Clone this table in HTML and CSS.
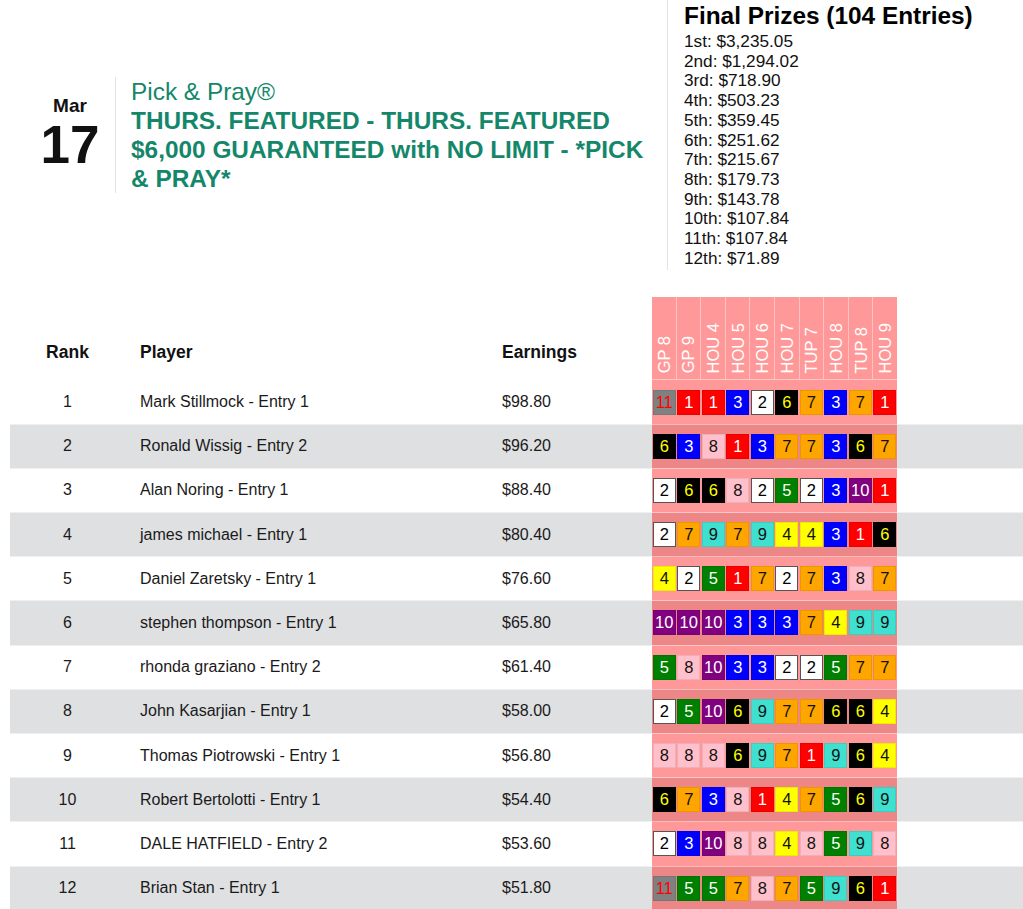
FILE: index.html
```html
<!DOCTYPE html>
<html>
<head>
<meta charset="utf-8">
<link rel="stylesheet" href="styles.css">
</head>
<body>
<div class="top">
  <div class="event">
    <div class="date">
      <div class="month">Mar</div>
      <div class="day">17</div>
    </div>
    <div class="title">
      <div class="brand">Pick &amp; Pray®</div>
      <div class="name">THURS. FEATURED - THURS. FEATURED $6,000 GUARANTEED with NO LIMIT - *PICK &amp; PRAY*</div>
    </div>
  </div>
  <div class="prizes">
    <div class="prizes-title">Final Prizes (104 Entries)</div>
    <div class="prize">1st: $3,235.05</div>
    <div class="prize">2nd: $1,294.02</div>
    <div class="prize">3rd: $718.90</div>
    <div class="prize">4th: $503.23</div>
    <div class="prize">5th: $359.45</div>
    <div class="prize">6th: $251.62</div>
    <div class="prize">7th: $215.67</div>
    <div class="prize">8th: $179.73</div>
    <div class="prize">9th: $143.78</div>
    <div class="prize">10th: $107.84</div>
    <div class="prize">11th: $107.84</div>
    <div class="prize">12th: $71.89</div>
  </div>
</div>

<table class="board">
  <thead>
    <tr>
      <th class="rank">Rank</th>
      <th class="player">Player</th>
      <th class="earn">Earnings</th>
      <th class="picks-h">
        <div class="races">
          <div class="race"><span>GP 8</span></div>
          <div class="race"><span>GP 9</span></div>
          <div class="race"><span>HOU 4</span></div>
          <div class="race"><span>HOU 5</span></div>
          <div class="race"><span>HOU 6</span></div>
          <div class="race"><span>HOU 7</span></div>
          <div class="race"><span>TUP 7</span></div>
          <div class="race"><span>HOU 8</span></div>
          <div class="race"><span>TUP 8</span></div>
          <div class="race"><span>HOU 9</span></div>
        </div>
      </th>
      <th class="fill"></th>
    </tr>
  </thead>
  <tbody>
    <tr>
      <td class="rank">1</td><td class="player">Mark Stillmock - Entry 1</td><td class="earn">$98.80</td>
      <td class="picks"><div class="row"><span class="p c11">11</span><span class="p c1">1</span><span class="p c1">1</span><span class="p c3">3</span><span class="p c2">2</span><span class="p c6">6</span><span class="p c7">7</span><span class="p c3">3</span><span class="p c7">7</span><span class="p c1">1</span></div></td><td class="fill"></td>
    </tr>
    <tr>
      <td class="rank">2</td><td class="player">Ronald Wissig - Entry 2</td><td class="earn">$96.20</td>
      <td class="picks"><div class="row"><span class="p c6">6</span><span class="p c3">3</span><span class="p c8">8</span><span class="p c1">1</span><span class="p c3">3</span><span class="p c7">7</span><span class="p c7">7</span><span class="p c3">3</span><span class="p c6">6</span><span class="p c7">7</span></div></td><td class="fill"></td>
    </tr>
    <tr>
      <td class="rank">3</td><td class="player">Alan Noring - Entry 1</td><td class="earn">$88.40</td>
      <td class="picks"><div class="row"><span class="p c2">2</span><span class="p c6">6</span><span class="p c6">6</span><span class="p c8">8</span><span class="p c2">2</span><span class="p c5">5</span><span class="p c2">2</span><span class="p c3">3</span><span class="p c10">10</span><span class="p c1">1</span></div></td><td class="fill"></td>
    </tr>
    <tr>
      <td class="rank">4</td><td class="player">james michael - Entry 1</td><td class="earn">$80.40</td>
      <td class="picks"><div class="row"><span class="p c2">2</span><span class="p c7">7</span><span class="p c9">9</span><span class="p c7">7</span><span class="p c9">9</span><span class="p c4">4</span><span class="p c4">4</span><span class="p c3">3</span><span class="p c1">1</span><span class="p c6">6</span></div></td><td class="fill"></td>
    </tr>
    <tr>
      <td class="rank">5</td><td class="player">Daniel Zaretsky - Entry 1</td><td class="earn">$76.60</td>
      <td class="picks"><div class="row"><span class="p c4">4</span><span class="p c2">2</span><span class="p c5">5</span><span class="p c1">1</span><span class="p c7">7</span><span class="p c2">2</span><span class="p c7">7</span><span class="p c3">3</span><span class="p c8">8</span><span class="p c7">7</span></div></td><td class="fill"></td>
    </tr>
    <tr>
      <td class="rank">6</td><td class="player">stephen thompson - Entry 1</td><td class="earn">$65.80</td>
      <td class="picks"><div class="row"><span class="p c10">10</span><span class="p c10">10</span><span class="p c10">10</span><span class="p c3">3</span><span class="p c3">3</span><span class="p c3">3</span><span class="p c7">7</span><span class="p c4">4</span><span class="p c9">9</span><span class="p c9">9</span></div></td><td class="fill"></td>
    </tr>
    <tr>
      <td class="rank">7</td><td class="player">rhonda graziano - Entry 2</td><td class="earn">$61.40</td>
      <td class="picks"><div class="row"><span class="p c5">5</span><span class="p c8">8</span><span class="p c10">10</span><span class="p c3">3</span><span class="p c3">3</span><span class="p c2">2</span><span class="p c2">2</span><span class="p c5">5</span><span class="p c7">7</span><span class="p c7">7</span></div></td><td class="fill"></td>
    </tr>
    <tr>
      <td class="rank">8</td><td class="player">John Kasarjian - Entry 1</td><td class="earn">$58.00</td>
      <td class="picks"><div class="row"><span class="p c2">2</span><span class="p c5">5</span><span class="p c10">10</span><span class="p c6">6</span><span class="p c9">9</span><span class="p c7">7</span><span class="p c7">7</span><span class="p c6">6</span><span class="p c6">6</span><span class="p c4">4</span></div></td><td class="fill"></td>
    </tr>
    <tr>
      <td class="rank">9</td><td class="player">Thomas Piotrowski - Entry 1</td><td class="earn">$56.80</td>
      <td class="picks"><div class="row"><span class="p c8">8</span><span class="p c8">8</span><span class="p c8">8</span><span class="p c6">6</span><span class="p c9">9</span><span class="p c7">7</span><span class="p c1">1</span><span class="p c9">9</span><span class="p c6">6</span><span class="p c4">4</span></div></td><td class="fill"></td>
    </tr>
    <tr>
      <td class="rank">10</td><td class="player">Robert Bertolotti - Entry 1</td><td class="earn">$54.40</td>
      <td class="picks"><div class="row"><span class="p c6">6</span><span class="p c7">7</span><span class="p c3">3</span><span class="p c8">8</span><span class="p c1">1</span><span class="p c4">4</span><span class="p c7">7</span><span class="p c5">5</span><span class="p c6">6</span><span class="p c9">9</span></div></td><td class="fill"></td>
    </tr>
    <tr>
      <td class="rank">11</td><td class="player">DALE HATFIELD - Entry 2</td><td class="earn">$53.60</td>
      <td class="picks"><div class="row"><span class="p c2">2</span><span class="p c3">3</span><span class="p c10">10</span><span class="p c8">8</span><span class="p c8">8</span><span class="p c4">4</span><span class="p c8">8</span><span class="p c5">5</span><span class="p c9">9</span><span class="p c8">8</span></div></td><td class="fill"></td>
    </tr>
    <tr>
      <td class="rank">12</td><td class="player">Brian Stan - Entry 1</td><td class="earn">$51.80</td>
      <td class="picks"><div class="row"><span class="p c11">11</span><span class="p c5">5</span><span class="p c5">5</span><span class="p c7">7</span><span class="p c8">8</span><span class="p c7">7</span><span class="p c5">5</span><span class="p c9">9</span><span class="p c6">6</span><span class="p c1">1</span></div></td><td class="fill"></td>
    </tr>
  </tbody>
</table>
</body>
</html>
```
FILE: styles.css
```css
html, body {
  margin: 0;
  padding: 0;
  background: #fff;
  overflow: hidden;
}
body {
  font-family: "Liberation Sans", Arial, sans-serif;
  color: #111;
}

.top {
  display: flex;
  align-items: center;
  padding-left: 10px;
}
.event {
  flex: 1;
  display: flex;
  align-items: stretch;
}
.date {
  width: 90px;
  margin-left: 15px;
  border-right: 1px solid #e2e2e2;
  display: flex;
  flex-direction: column;
  align-items: center;
  justify-content: center;
  font-weight: bold;
  color: #111;
  padding-bottom: 2px;
}
.month {
  font-size: 19px;
  line-height: 22px;
}
.day {
  font-size: 53px;
  line-height: 56px;
}
.title {
  flex: 1;
  padding: 0 16px 0 15px;
  color: #14876b;
  font-size: 24.4px;
  line-height: 29px;
}
.name {
  font-weight: bold;
}
.prizes {
  width: 356px;
  box-sizing: border-box;
  border-left: 1px solid #e2e2e2;
  padding-left: 16px;
  padding-bottom: 2px;
}
.prizes-title {
  font-weight: bold;
  font-size: 24.4px;
  line-height: 34px;
  margin-top: -1px;
  margin-bottom: -1px;
  color: #000;
}
.prize {
  font-size: 17.2px;
  line-height: 19.7px;
  color: #111;
}

.board {
  margin-top: 27px;
  margin-left: 10px;
  width: 1013px;
  border-collapse: collapse;
  table-layout: fixed;
  font-size: 16px;
}
.board th {
  font-weight: bold;
  font-size: 17.5px;
  text-align: left;
  vertical-align: bottom;
  height: 82px;
  padding: 0 0 17px 15px;
  box-sizing: border-box;
}
.board th.rank, .board td.rank {
  width: 115px;
  text-align: center;
  padding-left: 0;
}
.board .player {
  width: 362px;
}
.board .earn {
  width: 165px;
}
.board .picks-h, .board .picks {
  width: 245px;
  padding: 0;
  background: rgba(255, 0, 0, 0.4);
  border-bottom: 1px solid rgba(255, 255, 255, 0.45);
}
.board .fill {
  padding: 0;
}
.board td {
  height: 44.2px;
  box-sizing: border-box;
  padding: 0 0 0 15px;
  vertical-align: middle;
  color: #1a1a1a;
}
.board tbody tr {
  border-bottom: 1px solid #f0f0f0;
}
.board tbody tr:nth-child(even) {
  background: #dfe0e2;
}

.races {
  display: flex;
  height: 82px;
}
.race {
  flex: 1;
  display: flex;
  justify-content: center;
  align-items: flex-end;
  padding-bottom: 6px;
  border-right: 1px solid rgba(255, 255, 255, 0.4);
}
.race:last-child {
  border-right: none;
}
.race span {
  writing-mode: vertical-rl;
  transform: rotate(180deg);
  color: #fff;
  font-weight: normal;
  font-size: 16.5px;
  line-height: 18px;
  white-space: nowrap;
}

.row {
  display: grid;
  grid-template-columns: repeat(10, 1fr);
  align-items: center;
  justify-items: center;
}
.p {
  width: 23px;
  height: 25px;
  box-sizing: border-box;
  display: flex;
  align-items: center;
  justify-content: center;
  font-size: 16.5px;
  border: 1px solid rgba(0, 0, 0, 0.08);
}
.c1 { background: #ff0000; color: #fff; }
.c2 { background: #fff; color: #000; border: 1px solid #555; }
.c3 { background: #0000ff; color: #fff; }
.c4 { background: #ffff00; color: #111; }
.c5 { background: #008000; color: #fff; }
.c6 { background: #000; color: #ffff00; }
.c7 { background: #ffa500; color: #111; }
.c8 { background: #ffc0cb; color: #111; }
.c9 { background: #40e0d0; color: #111; }
.c10 { background: #800080; color: #fff; }
.c11 { background: #808080; color: #ff0000; }
```
